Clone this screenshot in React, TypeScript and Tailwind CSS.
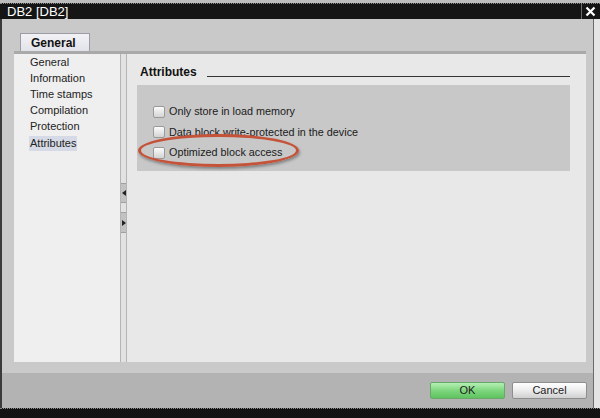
import React from 'react'

const NAV = ['General', 'Information', 'Time stamps', 'Compilation', 'Protection', 'Attributes']

const OPTIONS = ['Only store in load memory', 'Data block write-protected in the device', 'Optimized block access']

function Checkbox() {
  return (
    <span className="w-[12px] h-[12px] shrink-0 rounded-[2px] border border-[#9a9a9a] bg-gradient-to-b from-[#fbfbfb] to-[#d4d4d4]" />
  )
}

export default function App() {
  return (
    <div className="w-[600px] h-[418px] flex flex-col bg-[#d6d6d6] overflow-hidden font-['Liberation_Sans',Arial,sans-serif]">
      {/* title bar */}
      <div className="h-[3px] bg-[#bdbdbd] shrink-0" />
      <div className="h-[16px] shrink-0 bg-[#151515] border-t border-dotted border-[#8a8a8a] flex items-center justify-between pl-[7px] pr-[4px]">
        <span className="text-[13px] leading-none text-white">DB2 [DB2]</span>
        <span className="h-full border-l border-[#6b6b6b] pl-[3px] flex items-center">
          <svg width="11" height="11" viewBox="0 0 11 11">
            <path d="M1.5 1.5 L9.5 9.5 M9.5 1.5 L1.5 9.5" stroke="white" strokeWidth="2.2" />
          </svg>
        </span>
      </div>

      {/* body */}
      <div className="flex-1 flex min-h-0">
        <div className="flex-1 flex flex-col bg-[#c9c9c9] border-l-2 border-[#3a3a3a] border-r border-r-[#6a6a6a]">
          <div className="flex-1 flex flex-col pl-[12px] pr-[7px] pt-[14px]">
            {/* tab */}
            <div className="h-[18px] flex">
              <div className="ml-[6px] w-[70px] h-[18px] bg-gradient-to-b from-[#f2f2f6] to-[#e2e3ea] border border-[#9c9ca4] border-b-0 flex items-center pl-[10px]">
                <span className="text-[12px] font-bold text-[#111] leading-none">General</span>
              </div>
            </div>
            <div className="h-[3px] bg-[#a9a9a9]" />

            {/* panels */}
            <div className="h-[308px] flex">
              <div className="w-[106px] bg-[#efefef] pl-[15px] flex flex-col">
                {NAV.map((n) => (
                  <div key={n} className="h-[16.2px] flex items-center">
                    <span
                      className={`text-[11px] text-[#222] px-[1px] leading-[15px] ${
                        n === 'Attributes' ? 'bg-[#d6dae6]' : ''
                      }`}
                    >
                      {n}
                    </span>
                  </div>
                ))}
              </div>

              {/* splitter */}
              <div className="w-[7px] bg-[#e2e2e2] border-x border-[#b4b4b4] flex flex-col">
                <div className="h-[129px]" />
                <div className="h-[20px] bg-[#c2c2c2] border-y border-[#a0a0a0] flex items-center justify-center">
                  <svg width="4" height="6" viewBox="0 0 4 6">
                    <path d="M4 0 L0 3 L4 6 Z" fill="#222" />
                  </svg>
                </div>
                <div className="h-[9px]" />
                <div className="h-[21px] bg-[#c2c2c2] border-y border-[#a0a0a0] flex items-center justify-center">
                  <svg width="4" height="6" viewBox="0 0 4 6">
                    <path d="M0 0 L4 3 L0 6 Z" fill="#222" />
                  </svg>
                </div>
              </div>

              <div className="flex-1 bg-[#e8e8e8] pl-[10px] pr-[16px] pt-[10px] flex flex-col">
                <div className="flex items-end gap-[10px] pl-[3px] h-[14px]">
                  <span className="text-[12px] font-bold text-[#111] leading-none">Attributes</span>
                  <div className="flex-1 h-[1px] bg-[#333] mb-[1px]" />
                </div>
                <div className="mt-[7px] h-[86px] bg-[#c8c8c8] pl-[16px] pt-[20px] flex flex-col gap-[7.5px]">
                  {OPTIONS.map((o, i) => (
                    <div key={o} className="relative flex items-center gap-[4px] h-[13px]">
                      {i === 2 && (
                        <div className="absolute left-[-15px] top-[-12px] w-[161px] h-[33px] rounded-[50%] border-[3px] border-[#c4533a] shadow-[1px_2px_3px_rgba(0,0,0,0.35)]" />
                      )}
                      <Checkbox />
                      <span className="text-[10.8px] text-[#1a1a1a] leading-none">{o}</span>
                    </div>
                  ))}
                </div>
              </div>
            </div>
            <div className="flex-1" />
          </div>

          {/* footer */}
          <div className="h-[35px] shrink-0 bg-[#b3b3b3] flex items-center justify-end pr-[6px] gap-[7px]">
            <button className="w-[75px] h-[17px] rounded-[2px] border border-[#6aa86a] bg-gradient-to-b from-[#b4efb4] via-[#7ed67e] to-[#5ec35e] text-[11px] text-[#222] leading-none">
              OK
            </button>
            <button className="w-[75px] h-[17px] rounded-[2px] border border-[#8e8e8e] bg-gradient-to-b from-[#ffffff] via-[#ececec] to-[#d0d0d0] text-[11px] text-[#222] leading-none">
              Cancel
            </button>
          </div>
        </div>
        <div className="w-[6px] bg-[#e4e4e4] shrink-0" />
      </div>
      <div className="h-[10px] shrink-0 bg-[#141414] border-t border-dotted border-[#888]" />
    </div>
  )
}
